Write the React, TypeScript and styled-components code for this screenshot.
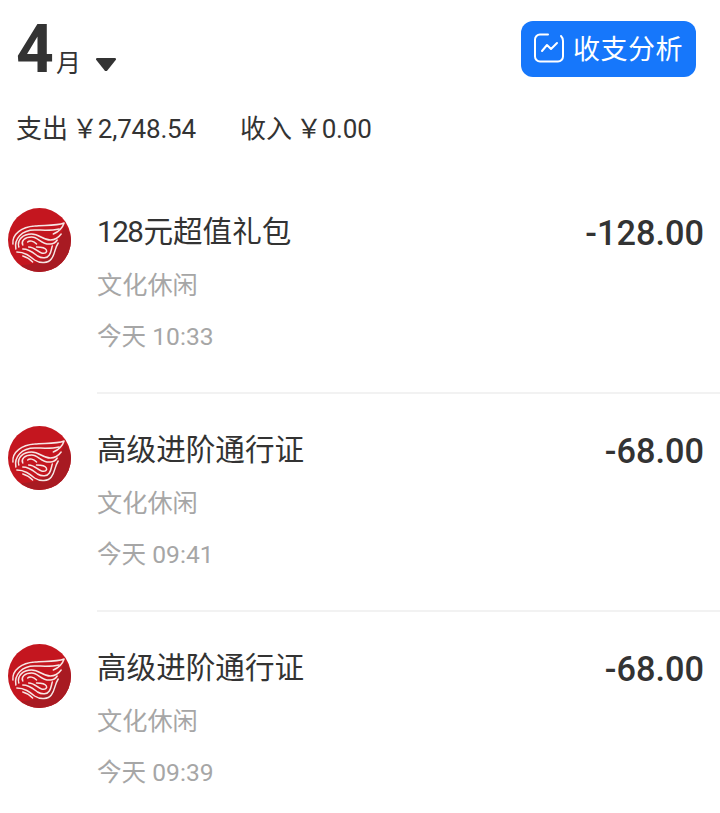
import React from "react";
import styled, { createGlobalStyle } from "styled-components";

const Global = createGlobalStyle`
  html, body { margin: 0; padding: 0; background: #fff; }
  body { font-family: Roboto, "Noto Sans CJK SC", sans-serif; width: 720px; height: 813px; overflow: hidden; }
`;

const Page = styled.div`
  width: 720px;
  height: 813px;
  overflow: hidden;
  background: #fff;
`;

const Header = styled.header`
  display: flex;
  justify-content: space-between;
  align-items: flex-start;
  padding: 21px 24px 0 16px;
  height: 75px;
  box-sizing: border-box;
`;

const Month = styled.div`
  display: flex;
  align-items: baseline;
  color: #333;
`;

const MonthNumber = styled.span`
  font-size: 66px;
  line-height: 58px;
  font-weight: 700;
`;

const MonthUnit = styled.span`
  font-size: 25px;
  line-height: 30px;
  margin-left: 2px;
`;

const Caret = styled.svg`
  width: 22px;
  height: 15px;
  margin-left: 14px;
  align-self: flex-end;
  margin-bottom: 7px;
`;

const AnalysisButton = styled.button`
  display: flex;
  align-items: center;
  gap: 9px;
  width: 175px;
  height: 56px;
  padding: 0 0 3px 13px;
  box-sizing: border-box;
  border: 0;
  border-radius: 12px;
  background: #1677fb;
  color: #fff;
  font-family: inherit;
  font-size: 27px;
  letter-spacing: 0.5px;
`;

const Summary = styled.div`
  display: flex;
  gap: 44px;
  padding: 38px 0 0 16px;
  font-size: 26px;
  line-height: 32px;
  color: #333;
`;

const Money = styled.span`
  margin-left: 4px;
  letter-spacing: -0.2px;
`;

const List = styled.div`
  padding-top: 63px;
`;

const Row = styled.article`
  display: flex;
  align-items: flex-start;
  height: 218px;
`;

const Logo = styled.svg`
  width: 63px;
  height: 64px;
  margin: 0 26px 0 8px;
  flex: none;
`;

const RowBody = styled.div<{ $last?: boolean }>`
  flex: 1;
  display: flex;
  justify-content: space-between;
  height: 184px;
  padding-right: 16px;
  border-bottom: ${(p) => (p.$last ? "0" : "2px solid #f2f2f2")};
`;

const Info = styled.div`
  display: flex;
  flex-direction: column;
`;

const Title = styled.div`
  font-size: 29.6px;
  line-height: 34px;
  color: #333;
  margin-top: 7px;
`;

const Digits = styled.span`
  letter-spacing: -1.5px;
  margin-right: 1px;
`;

const Category = styled.div`
  font-size: 25.2px;
  line-height: 32px;
  color: #a6a6a6;
  margin-top: 21px;
`;

const Time = styled.div`
  font-size: 24.6px;
  line-height: 32px;
  color: #a6a6a6;
  margin-top: 19px;
`;

const Amount = styled.div`
  font-size: 34.3px;
  line-height: 40px;
  font-weight: 500;
  color: #333;
  margin-top: 5px;
`;

const NetEaseLogo = () => (
  <Logo viewBox="0 0 64 64" preserveAspectRatio="none">
    <circle cx="32" cy="32" r="32" fill="#c4161f" />
    <path d="M64 32a32 32 0 0 1-32 32c-8 0-14-3-19-7 22 1 38-14 44-40 4 4 7 9 7 15z" fill="#a81a22" />
    <g fill="none" stroke="#f6e6e4" strokeWidth="1.5" strokeLinecap="round" strokeLinejoin="round">
      <path d="M5 36C4 26 14 19 27 18c10-1 22 0 30-3-2 6-6 9-11 11" />
      <path d="M8 41C6 31 14 22 27 22c8 0 16 1 25-1" />
      <path d="M11 39c-2-7 4-13 13-13 8 0 11 6 19 6 4 0 8-2 11-6" />
      <path d="M15 37c-2-4 2-8 9-8 7 0 10 8 19 7 3 0 5-1 7-4" />
      <path d="M20 34c2-2 6-1 9 2" />
      <path d="M9 44c8 0 13 4 18 8 6 4 14 3 17-1 4-5 3-10 7-16" />
      <path d="M15 41c7 0 11 4 15 7 5 3 10 2 12-1 2-3 2-6 3-9" />
      <path d="M21 39c6 0 9 5 13 6 4 1 6-1 5-3-1-2-5-3-10-3" />
      <path d="M15 48c4 1 7 3 10 6" />
    </g>
  </Logo>
);

const rows = [
  { digits: "128", title: "元超值礼包", time: "今天 10:33", amount: "-128.00" },
  { digits: "", title: "高级进阶通行证", time: "今天 09:41", amount: "-68.00" },
  { digits: "", title: "高级进阶通行证", time: "今天 09:39", amount: "-68.00" },
];

export default function App() {
  return (
    <Page>
      <Global />
      <Header>
        <Month>
          <MonthNumber>4</MonthNumber>
          <MonthUnit>月</MonthUnit>
          <Caret viewBox="0 0 24 16">
            <path d="M1 2.5Q1 1 2.5 1h19Q23 1 23 2.5L13 15h-2z" fill="#333" />
          </Caret>
        </Month>
        <AnalysisButton>
          <svg width="30" height="30" viewBox="0 0 30 30" fill="none" stroke="#fff" strokeWidth="2" strokeLinecap="round" strokeLinejoin="round">
            <path d="M14 1.5H6a5 5 0 0 0-5 5v17a5 5 0 0 0 5 5h18a5 5 0 0 0 5-5V8c0-2-1-4-2-5" />
            <path d="M8 18l5-6 4 4 6-6" />
          </svg>
          收支分析
        </AnalysisButton>
      </Header>
      <Summary>
        <span>支出<Money>￥2,748.54</Money></span>
        <span>收入<Money>￥0.00</Money></span>
      </Summary>
      <List>
        {rows.map((r, i) => (
          <Row key={i}>
            <NetEaseLogo />
            <RowBody $last={i === rows.length - 1}>
              <Info>
                <Title>{r.digits && <Digits>{r.digits}</Digits>}{r.title}</Title>
                <Category>文化休闲</Category>
                <Time>{r.time}</Time>
              </Info>
              <Amount>{r.amount}</Amount>
            </RowBody>
          </Row>
        ))}
      </List>
    </Page>
  );
}
